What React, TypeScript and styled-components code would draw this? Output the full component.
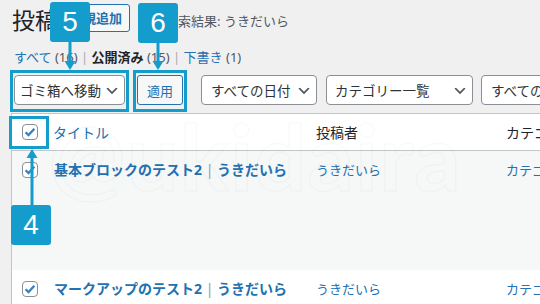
import React from 'react';
import styled, { createGlobalStyle } from 'styled-components';

const ACCENT = '#149ccc';
const LINK = '#2271b1';

const GlobalStyle = createGlobalStyle`
  html, body {
    margin: 0;
    padding: 0;
  }
  body {
    background: #f0f0f1;
    font-family: "Noto Sans", "Noto Sans CJK JP", sans-serif;
    color: #3c434a;
  }
`;

const Screen = styled.div`
  position: relative;
  width: 540px;
  height: 304px;
  overflow: hidden;
  background: #f0f0f1;
`;

const Wrap = styled.div`
  padding-left: 12px;
`;

const Heading = styled.div`
  display: flex;
  align-items: flex-start;
  height: 40px;
  white-space: nowrap;
`;

const Title = styled.h1`
  margin: 0;
  font-size: 23px;
  font-weight: 400;
  line-height: 40px;
  color: #1d2327;
`;

const AddNew = styled.a`
  margin: 4px 0 0 4px;
  height: 28px;
  box-sizing: border-box;
  padding: 0 7px;
  border: 1px solid ${LINK};
  border-radius: 3px;
  background: #f6f7f7;
  color: ${LINK};
  font-size: 13px;
  font-weight: 600;
  line-height: 26px;
  text-decoration: none;
`;

const Subtitle = styled.span`
  margin-left: 35px;
  font-size: 13px;
  line-height: 42px;
  color: #50575e;
`;

const StatusList = styled.ul`
  list-style: none;
  margin: 8px 0 0 2px;
  padding: 0;
  display: flex;
  font-size: 13px;
  line-height: 18px;
  white-space: pre;
`;

const StatusLink = styled.a<{ $current?: boolean }>`
  color: ${p => (p.$current ? '#1d2327' : LINK)};
  font-weight: ${p => (p.$current ? 600 : 400)};
  text-decoration: none;
`;

const Count = styled.span`
  color: #50575e;
  font-weight: 400;
`;

const Sep = styled.span`
  color: #a7aaad;
`;

const Toolbar = styled.div`
  display: flex;
  margin: 9px 0 0 2px;
  white-space: nowrap;
`;

const Select = styled.div<{ $w: number; $gap: number; $pad: number }>`
  flex: none;
  display: flex;
  align-items: center;
  justify-content: space-between;
  box-sizing: border-box;
  width: ${p => p.$w}px;
  height: 30px;
  margin-left: ${p => p.$gap}px;
  padding: 0 4px 0 ${p => p.$pad}px;
  border: 1px solid #8c8f94;
  border-radius: 4px;
  background: #fff;
  color: #2c3338;
  font-size: 13.5px;
  overflow: hidden;
`;

const Chevron = styled.svg`
  flex: none;
  width: 16px;
  height: 16px;
  margin-top: 1px;
`;

const ApplyButton = styled.button`
  flex: none;
  height: 30px;
  margin-left: 12px;
  padding: 0 9px;
  border: 1px solid ${LINK};
  border-radius: 3px;
  background: #f6f7f7;
  color: ${LINK};
  font-family: inherit;
  font-size: 13px;
`;

const Table = styled.div`
  width: 620px;
  margin: 8px 0 0 11px;
  background: #fff;
  border-left: 1px solid #c3c4c7;
  border-top: 1px solid #c3c4c7;
`;

const HeadRow = styled.div`
  display: grid;
  grid-template-columns: 41px 263px 190px 1fr;
  align-items: center;
  height: 36px;
  border-bottom: 1px solid #c3c4c7;
  font-size: 14px;
  color: #1d2327;
`;

const Row = styled.div<{ $alt?: boolean; $h: number }>`
  display: grid;
  grid-template-columns: 41px 263px 190px 1fr;
  align-items: start;
  box-sizing: border-box;
  height: ${p => p.$h}px;
  padding-top: 9px;
  background: ${p => (p.$alt ? '#f6f7f7' : '#fff')};
  line-height: 20px;
  white-space: nowrap;
`;

const CheckCell = styled.div<{ $top?: number }>`
  display: flex;
  padding-left: 10px;
  margin-top: ${p => p.$top ?? 0}px;
`;

const Box = styled.span`
  display: flex;
  align-items: center;
  justify-content: center;
  width: 16px;
  height: 16px;
  box-sizing: border-box;
  border: 1px solid #8c8f94;
  border-radius: 4px;
  background: #fff;
`;

const SortLink = styled.span`
  color: ${LINK};
`;

const RowTitle = styled.a`
  padding-left: 1px;
  color: ${LINK};
  font-size: 14px;
  font-weight: 700;
  text-decoration: none;
`;

const Bar = styled.span`
  font-weight: 400;
  color: #8a9bb0;
`;

const CellLink = styled.a`
  color: ${LINK};
  font-size: 13px;
  text-decoration: none;
`;

const Watermark = styled.div`
  position: absolute;
  left: 48px;
  top: 100px;
  font-family: Lato, "Noto Sans", sans-serif;
  font-size: 92px;
  font-weight: 700;
  letter-spacing: 1px;
  color: transparent;
  -webkit-text-stroke: 1.5px rgba(0, 0, 0, 0.022);
  white-space: nowrap;
  pointer-events: none;
`;

const Highlight = styled.div<{ $x: number; $y: number; $w: number; $h: number }>`
  position: absolute;
  left: ${p => p.$x}px;
  top: ${p => p.$y}px;
  width: ${p => p.$w}px;
  height: ${p => p.$h}px;
  box-sizing: border-box;
  border: 3px solid ${ACCENT};
`;

const Badge = styled.div<{ $x: number; $y: number }>`
  position: absolute;
  left: ${p => p.$x}px;
  top: ${p => p.$y}px;
  width: 40px;
  height: 40px;
  display: flex;
  align-items: center;
  justify-content: center;
  border-radius: 3px;
  background: ${ACCENT};
  color: #fff;
  font-family: "Liberation Sans", Arial, sans-serif;
  font-size: 28px;
  line-height: 1;
`;

const ArrowSvg = styled.svg<{ $x: number; $y: number }>`
  position: absolute;
  left: ${p => p.$x}px;
  top: ${p => p.$y}px;
`;

function Arrow({ x, from, to }: { x: number; from: number; to: number }) {
  const len = Math.abs(to - from);
  const top = Math.min(from, to);
  const down = to > from;
  return (
    <ArrowSvg $x={x - 6} $y={top} width={12} height={len} viewBox={`0 0 12 ${len}`}>
      {down ? (
        <>
          <rect x={4.5} y={0} width={3} height={len - 8} fill={ACCENT} />
          <polygon points={`0.5,${len - 9} 11.5,${len - 9} 6,${len}`} fill={ACCENT} />
        </>
      ) : (
        <>
          <rect x={4.5} y={8} width={3} height={len - 8} fill={ACCENT} />
          <polygon points="6,0 0.5,9 11.5,9" fill={ACCENT} />
        </>
      )}
    </ArrowSvg>
  );
}

function DropArrow() {
  return (
    <Chevron viewBox="0 0 20 20">
      <path d="M5 6l5 5 5-5 2 1-7 7-7-7 2-1z" fill="#50575e" />
    </Chevron>
  );
}

function Checkbox() {
  return (
    <Box>
      <svg width="14" height="14" viewBox="0 0 14 14">
        <path d="M2.6 7.2l2.9 2.9 5.9-6.4" fill="none" stroke="#3582c4" strokeWidth="2.3" />
      </svg>
    </Box>
  );
}

export default function App() {
  return (
    <Screen>
      <GlobalStyle />
      <Wrap>
        <Heading>
          <Title>投稿</Title>
          <AddNew>新規追加</AddNew>
          <Subtitle>検索結果: うきだいら</Subtitle>
        </Heading>
        <StatusList>
          <li>
            <StatusLink>すべて <Count>(16)</Count></StatusLink>
            <Sep> | </Sep>
          </li>
          <li>
            <StatusLink $current>公開済み <Count>(15)</Count></StatusLink>
            <Sep> | </Sep>
          </li>
          <li>
            <StatusLink>下書き <Count>(1)</Count></StatusLink>
          </li>
        </StatusList>
        <Toolbar>
          <Select $w={111} $gap={0} $pad={5}>
            ゴミ箱へ移動
            <DropArrow />
          </Select>
          <ApplyButton>適用</ApplyButton>
          <Select $w={116} $gap={18} $pad={9}>
            すべての日付
            <DropArrow />
          </Select>
          <Select $w={147} $gap={9} $pad={8}>
            カテゴリー一覧
            <DropArrow />
          </Select>
          <Select $w={140} $gap={8} $pad={9}>
            すべての形式
            <DropArrow />
          </Select>
        </Toolbar>
      </Wrap>

      <Table>
        <HeadRow>
          <CheckCell>
            <Checkbox />
          </CheckCell>
          <SortLink>タイトル</SortLink>
          <span>投稿者</span>
          <span>カテゴリー</span>
        </HeadRow>
        <Row $alt $h={119}>
          <CheckCell $top={2}>
            <Checkbox />
          </CheckCell>
          <RowTitle>
            基本ブロックのテスト2 <Bar>|</Bar> うきだいら
          </RowTitle>
          <CellLink>うきだいら</CellLink>
          <CellLink>カテゴリー</CellLink>
        </Row>
        <Row $h={60}>
          <CheckCell $top={2}>
            <Checkbox />
          </CheckCell>
          <RowTitle>
            マークアップのテスト2 <Bar>|</Bar> うきだいら
          </RowTitle>
          <CellLink>うきだいら</CellLink>
          <CellLink>カテゴリー</CellLink>
        </Row>
      </Table>

      <Watermark>@ukidaira</Watermark>

      <Highlight $x={10} $y={70} $w={119} $h={42} />
      <Highlight $x={133} $y={70} $w={54} $h={42} />
      <Highlight $x={9} $y={116} $w={40} $h={33} />

      <Arrow x={70} from={42} to={70} />
      <Arrow x={158} from={42} to={70} />
      <Arrow x={32} from={205} to={149} />

      <Badge $x={50} $y={2}>5</Badge>
      <Badge $x={138} $y={3}>6</Badge>
      <Badge $x={11} $y={205}>4</Badge>
    </Screen>
  );
}
